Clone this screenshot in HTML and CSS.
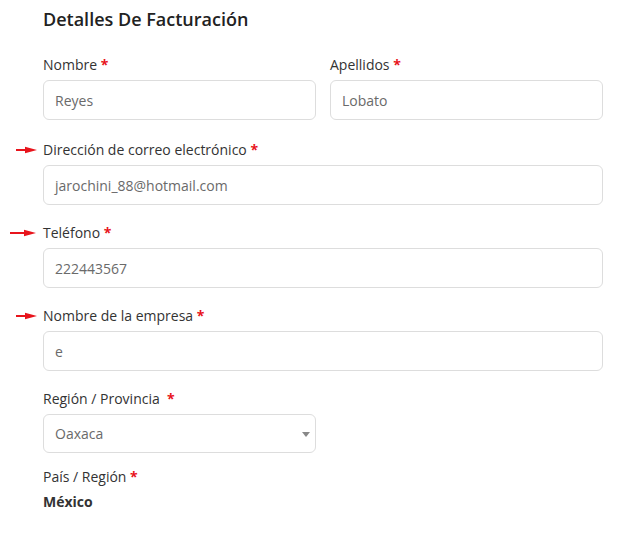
FILE: index.html
```html
<!DOCTYPE html>
<html lang="es">
<head>
<meta charset="utf-8">
<title>Detalles De Facturación</title>
<link rel="stylesheet" href="styles.css">
</head>
<body>
<form class="billing">
  <h3 class="title">Detalles De Facturación</h3>

  <div class="row two first">
    <div class="field">
      <label class="label">Nombre <span class="req">*</span></label>
      <div class="input">Reyes</div>
    </div>
    <div class="field">
      <label class="label">Apellidos <span class="req">*</span></label>
      <div class="input">Lobato</div>
    </div>
  </div>

  <div class="row">
    <div class="field">
      <label class="label"><svg class="mark" width="21" height="8" viewBox="0 0 21 8"><rect x="0" y="3" width="11" height="2" fill="#e8141c"/><polygon points="9,0.8 21,4 9,7.2" fill="#e8141c"/></svg>Dirección de correo electrónico <span class="req">*</span></label>
      <div class="input">jarochini_88@hotmail.com</div>
    </div>
  </div>

  <div class="row">
    <div class="field">
      <label class="label"><svg class="mark long" width="26" height="8" viewBox="0 0 26 8"><rect x="0" y="3" width="16" height="2" fill="#e8141c"/><polygon points="14,0.8 26,4 14,7.2" fill="#e8141c"/></svg>Teléfono <span class="req">*</span></label>
      <div class="input">222443567</div>
    </div>
  </div>

  <div class="row">
    <div class="field">
      <label class="label"><svg class="mark" width="21" height="8" viewBox="0 0 21 8"><rect x="0" y="3" width="11" height="2" fill="#e8141c"/><polygon points="9,0.8 21,4 9,7.2" fill="#e8141c"/></svg>Nombre de la empresa <span class="req">*</span></label>
      <div class="input">e</div>
    </div>
  </div>

  <div class="row two region">
    <div class="field">
      <label class="label">Región / Provincia &nbsp;<span class="req">*</span></label>
      <div class="input select">Oaxaca<span class="caret"></span></div>
    </div>
  </div>

  <div class="row country">
    <div class="field">
      <label class="label">País / Región <span class="req">*</span></label>
      <div class="value">México</div>
    </div>
  </div>
</form>
</body>
</html>
```

FILE: styles.css
```css
* { box-sizing: border-box; }

body {
  margin: 0;
  background: #ffffff;
  font-family: "Open Sans", "Noto Sans", sans-serif;
  color: #333333;
}

.billing {
  width: 560px;
  margin-left: 43px;
  padding-top: 7px;
}

.title {
  margin: 0 0 24px 0;
  font-size: 18px;
  line-height: 24px;
  font-weight: 600;
  color: #222222;
}

.row {
  margin-bottom: 18px;
}

.row.two {
  display: grid;
  grid-template-columns: 1fr 1fr;
  column-gap: 14px;
}

.row.first { margin-bottom: 20px; }

.row.region { margin-bottom: 14px; }

.field {
  display: flex;
  flex-direction: column;
  gap: 5px;
}

.label {
  position: relative;
  font-size: 14px;
  line-height: 20px;
  color: #333333;
}

.req {
  color: #e8141c;
  font-weight: 700;
}

.mark {
  position: absolute;
  left: -27px;
  top: 6px;
}

.mark.long {
  left: -33px;
}

.input {
  position: relative;
  height: 40px;
  border: 1px solid #dddddd;
  border-radius: 6px;
  padding: 0 11px;
  display: flex;
  align-items: center;
  font-size: 14px;
  color: #6a6a6a;
  background: #ffffff;
}

.select {
  height: 39px;
}

.caret {
  position: absolute;
  right: 5px;
  top: 17px;
  width: 0;
  height: 0;
  border-left: 4px solid transparent;
  border-right: 4px solid transparent;
  border-top: 5px solid #888888;
}

.value {
  font-size: 14px;
  line-height: 20px;
  font-weight: 700;
  color: #333333;
}
```
